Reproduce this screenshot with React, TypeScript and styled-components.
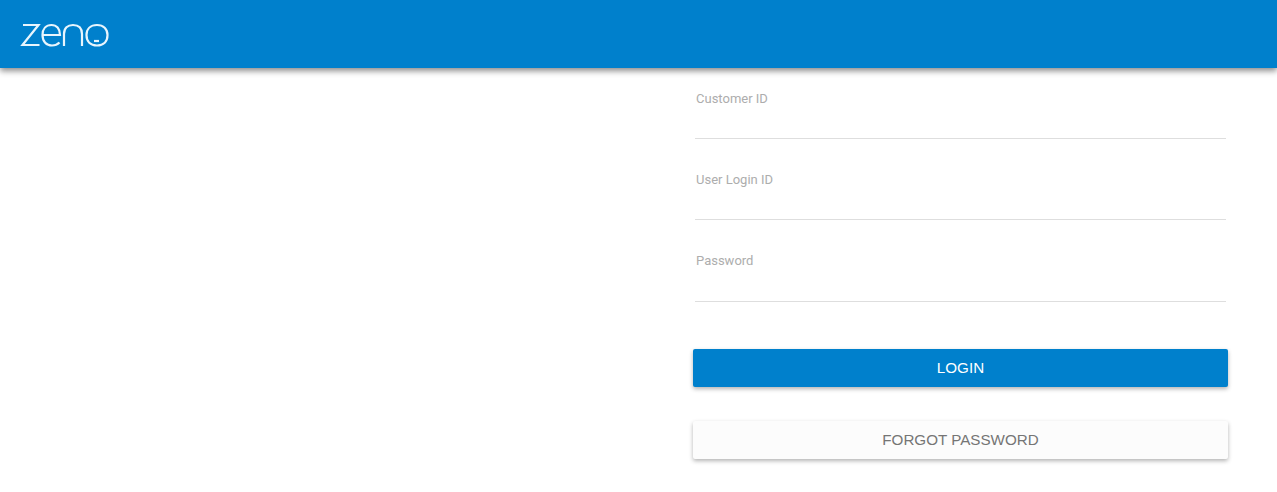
import styled, { createGlobalStyle } from "styled-components";

const GlobalStyle = createGlobalStyle`
  html, body {
    margin: 0;
    padding: 0;
    background: #fff;
    font-family: Roboto, "Liberation Sans", sans-serif;
  }
`;

const Header = styled.header`
  display: flex;
  align-items: center;
  height: 68px;
  padding-left: 20px;
  background: #0080cc;
  box-shadow: 0 3px 6px rgba(0, 0, 0, 0.45);
`;

const Logo = styled.svg`
  display: block;
  width: 90px;
  height: 30px;
`;

const Main = styled.main`
  display: flex;
  justify-content: flex-end;
  padding: 21px 49px 0 0;
`;

const Form = styled.form`
  display: flex;
  flex-direction: column;
  width: 535px;
`;

const Fields = styled.div`
  display: flex;
  flex-direction: column;
  gap: 31.25px;
  padding: 0 2px;
  margin-bottom: 47.5px;
`;

const Field = styled.label`
  display: block;
  height: 50px;
  padding-top: 0.6px;
  box-sizing: border-box;
  border-bottom: 1px solid #dedede;
`;

const FieldLabel = styled.span`
  display: block;
  padding-left: 1px;
  font-size: 13px;
  line-height: 18px;
  color: #adadad;
`;

const Button = styled.button<{ $primary?: boolean }>`
  height: 38px;
  margin-bottom: 34px;
  padding: 0 0 2px;
  border: 0;
  border-radius: 2px;
  font-family: "Liberation Sans", Arial, sans-serif;
  font-size: 15.2px;
  color: ${(p) => (p.$primary ? "#fff" : "#757575")};
  background: ${(p) => (p.$primary ? "#0080cc" : "#fcfcfc")};
  box-shadow: 0 2px 4px rgba(0, 0, 0, 0.3);
`;

const fields = ["Customer ID", "User Login ID", "Password"];

export default function App() {
  return (
    <>
      <GlobalStyle />
      <Header>
        <Logo viewBox="0 0 90 30" fill="none" stroke="#e8f5fd" strokeWidth="2.2">
          <path d="M3 6H18.500L2.500 26H19.500" />
          <path d="M22.500 16H40C40 9.500 36.500 6 31.500 6C26 6 22.500 10 22.500 16C22.500 22.500 26.500 26.500 32 26.500C35 26.500 37.500 25.500 39.500 23.500" />
          <path d="M44 27V15C44 9 47.500 6 53 6C58.500 6 62 9 62 15V27" />
          <path d="M77 6C70.500 6 66.500 10 66.500 16C66.500 22.500 70.500 26.500 77 26.500C83.500 26.500 87.500 22.500 87.500 16C87.500 10 83.500 6 77 6Z" />
          <path d="M74 22H79" />
        </Logo>
      </Header>
      <Main>
        <Form>
          <Fields>
            {fields.map((name) => (
              <Field key={name}>
                <FieldLabel>{name}</FieldLabel>
              </Field>
            ))}
          </Fields>
          <Button type="button" $primary>
            LOGIN
          </Button>
          <Button type="button">FORGOT PASSWORD</Button>
        </Form>
      </Main>
    </>
  );
}
